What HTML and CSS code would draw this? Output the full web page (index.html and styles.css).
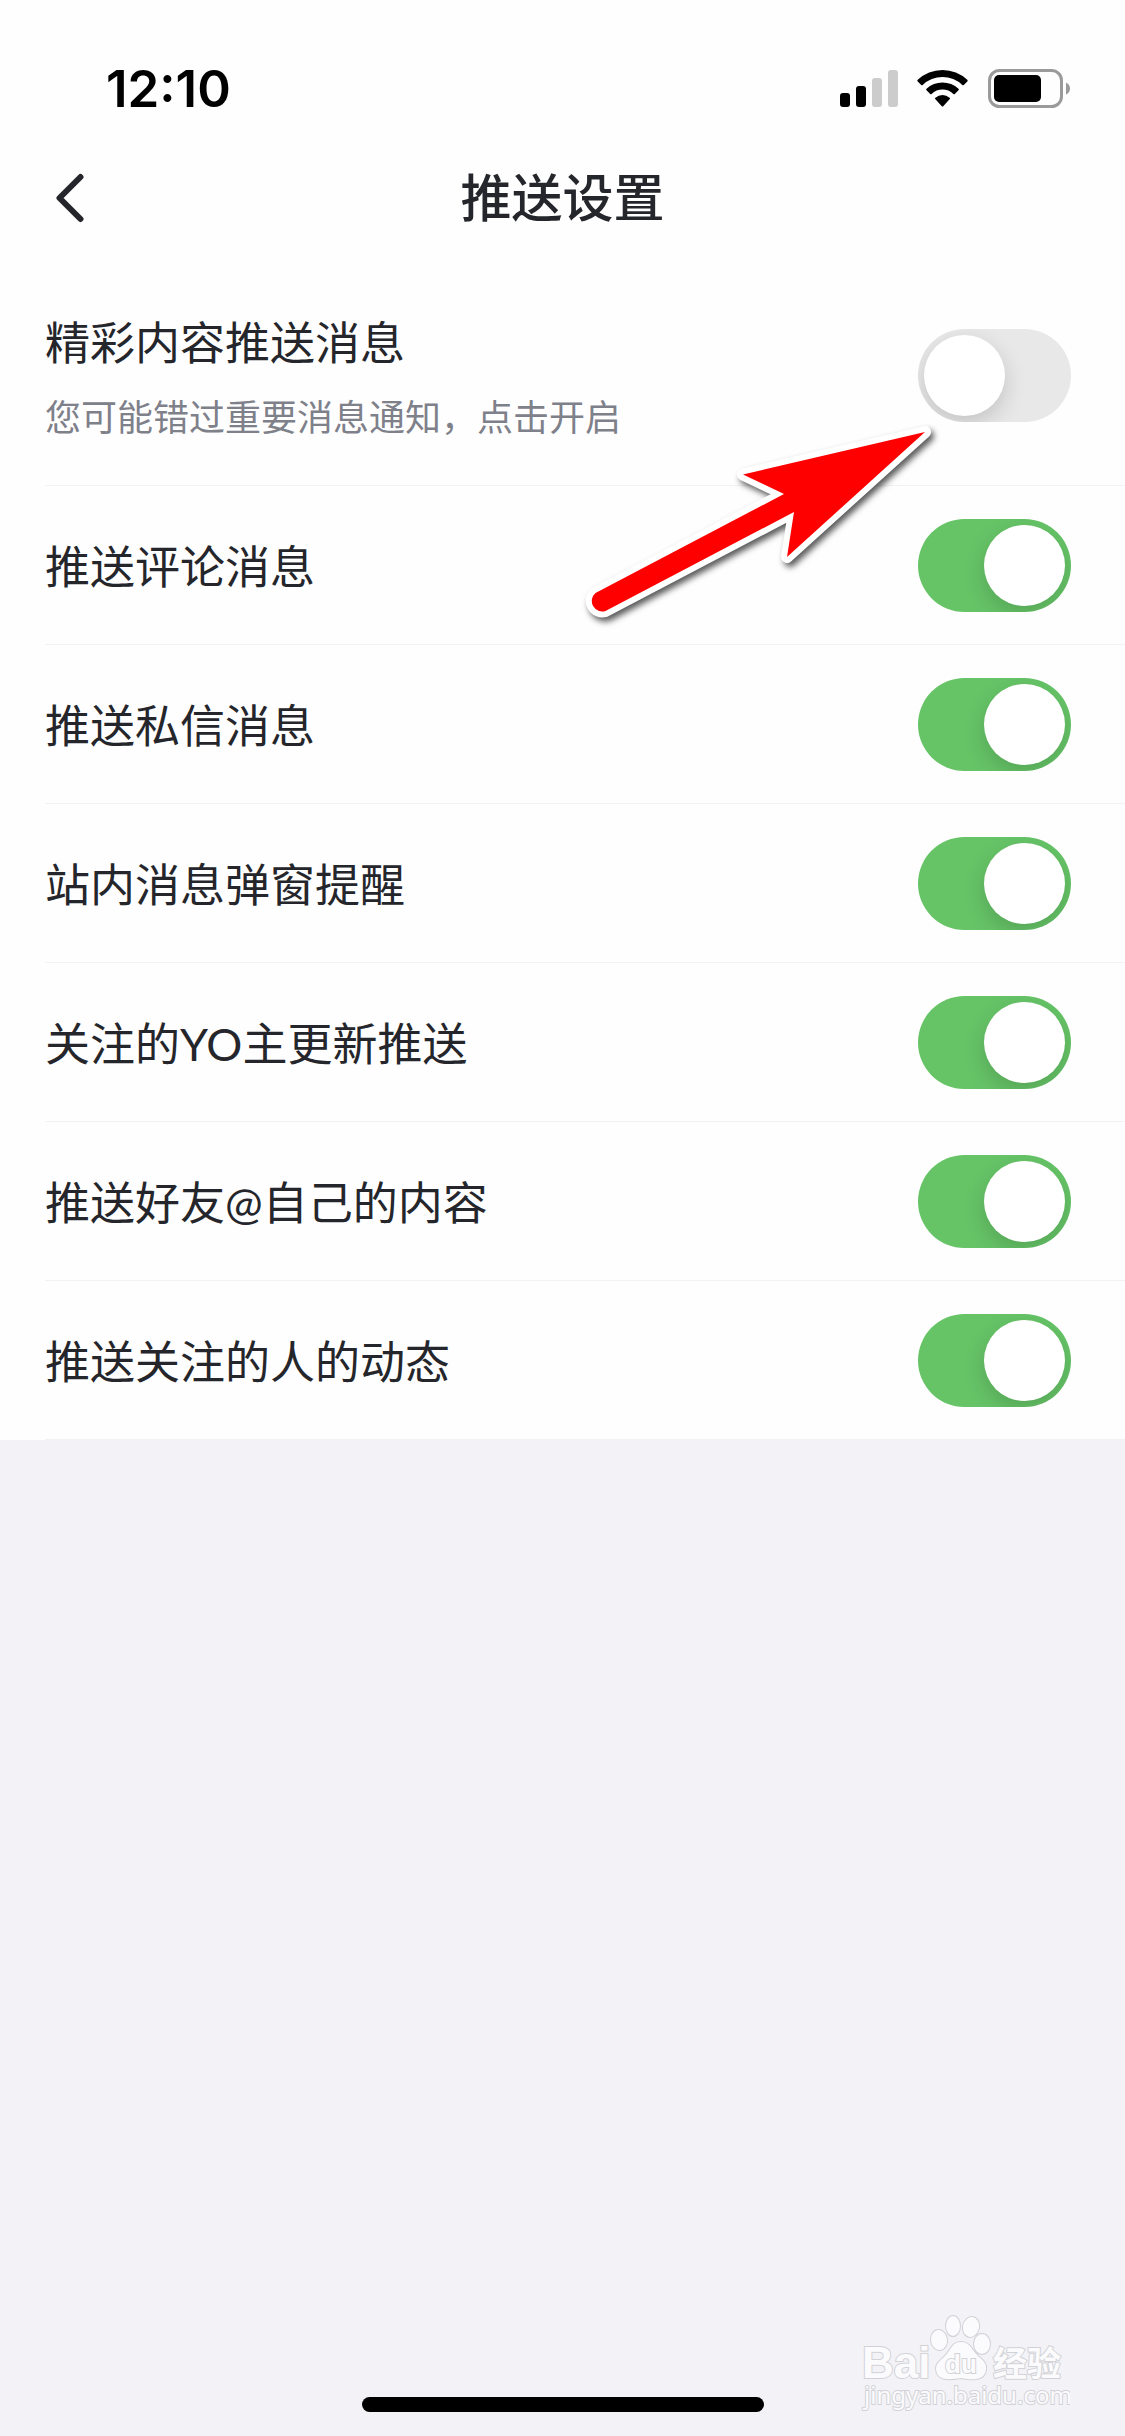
FILE: index.html
```html
<!DOCTYPE html>
<html lang="zh-CN">
<head>
<meta charset="utf-8">
<meta name="viewport" content="width=device-width">
<title>推送设置</title>
<link rel="stylesheet" href="styles.css">
</head>
<body>
<header class="top">
  <div class="status">
    <time class="clock">12:10</time>
    <div class="status-icons">
      <svg width="58" height="40" viewBox="0 0 58 40" aria-hidden="true">
        <rect x="0" y="24" width="10" height="14" rx="3"/>
        <rect x="16" y="17" width="10" height="21" rx="3"/>
        <rect x="32" y="9" width="10" height="29" rx="3" fill="#ccc"/>
        <rect x="48" y="1" width="10" height="37" rx="3" fill="#ccc"/>
      </svg>
      <svg width="52" height="40" viewBox="0 0 52 40" aria-hidden="true">
        <path d="M0.5 12.2 Q0 11.5 .7 10.8 A36 36 0 0 1 50.300 10.800 Q51 11.500 50.500 12.200 L46.800 16 Q46 16.600 45.300 16 A28.500 28.500 0 0 0 5.700 16 Q5 16.600 4.200 16 Z"/>
        <path d="M9.300 21 Q8.800 20.300 9.500 19.700 A23.500 23.500 0 0 1 41.500 19.700 Q42.200 20.300 41.700 21 L37.800 24.900 Q37.100 25.500 36.400 24.900 A16 16 0 0 0 14.600 24.900 Q13.900 25.500 13.200 24.900 Z"/>
        <path d="M18.200 30 Q17.600 29.300 18.400 28.700 A11 11 0 0 1 32.600 28.700 Q33.400 29.300 32.800 30 L26.200 37.200 Q25.500 38 24.800 37.200 Z"/>
      </svg>
      <svg width="83" height="40" viewBox="0 0 83 40" aria-hidden="true">
        <rect x="1.500" y="1.500" width="72" height="36" rx="10" fill="none" stroke="#9a9a9a" stroke-width="3"/>
        <rect x="6" y="6" width="47" height="27" rx="5"/>
        <path d="M78 13.500 Q82 15.500 82 19.500 T78 25.500 Z" fill="#9a9a9a"/>
      </svg>
    </div>
  </div>
  <nav class="nav">
    <button class="back" type="button" aria-label="返回">
      <svg width="30" height="50" viewBox="0 0 30 50" aria-hidden="true">
        <path d="M25.500 4 L4.500 25 L25.500 46" fill="none" stroke="#25262b" stroke-width="6" stroke-linecap="round" stroke-linejoin="round"/>
      </svg>
    </button>
    <h1 class="title">推送设置</h1>
  </nav>
</header>

<main class="list">
  <div class="row row-lead">
    <label class="text" for="s1"><span class="label">精彩内容推送消息</span><span class="hint">您可能错过重要消息通知，点击开启</span></label>
    <input class="switch" id="s1" type="checkbox">
    <svg class="arrow" width="360" height="210" viewBox="0 0 360 210" aria-hidden="true">
      <path d="M347 13 L165 55.500 L206 75 L17.500 174 A10.500 10.500 0 0 0 27.500 192 L216 93 L209 138 Z" fill="#f00" stroke="#fff" stroke-width="12" stroke-linejoin="round" paint-order="stroke"/>
    </svg>
  </div>
  <div class="row"><label class="label text" for="s2">推送评论消息</label><input class="switch" id="s2" type="checkbox" checked></div>
  <div class="row"><label class="label text" for="s3">推送私信消息</label><input class="switch" id="s3" type="checkbox" checked></div>
  <div class="row"><label class="label text" for="s4">站内消息弹窗提醒</label><input class="switch" id="s4" type="checkbox" checked></div>
  <div class="row"><label class="label text" for="s5">关注的YO主更新推送</label><input class="switch" id="s5" type="checkbox" checked></div>
  <div class="row"><label class="label text" for="s6">推送好友@自己的内容</label><input class="switch" id="s6" type="checkbox" checked></div>
  <div class="row"><label class="label text" for="s7">推送关注的人的动态</label><input class="switch" id="s7" type="checkbox" checked></div>
</main>

<footer class="bottom">
  <div class="home-bar"></div>
  <svg class="watermark" width="220" height="110" viewBox="0 0 220 110" role="img" aria-label="Baidu经验 jingyan.baidu.com">
    <g class="mark">
      <text class="mark-bai" x="12" y="68">Bai</text>
      <ellipse cx="89" cy="30" rx="8" ry="10" transform="rotate(-8 89 30)"/>
      <ellipse cx="103" cy="16" rx="7" ry="10"/>
      <ellipse cx="121" cy="17" rx="8" ry="10" transform="rotate(12 121 17)"/>
      <ellipse cx="132" cy="34" rx="8" ry="10"/>
      <path d="M111 32 C120 32 122 40 128 46 C134 51 137 54 136 60 C134 71 123 70 111 68 C98 70 87 71 86 59 C86 53 90 51 95 46 C101 40 102 32 111 32 Z"/>
      <text class="mark-du" x="95" y="63">du</text>
      <text class="mark-cn" x="143" y="66">经验</text>
      <text class="mark-url" x="14" y="94">jingyan.baidu.com</text>
    </g>
  </svg>
</footer>
</body>
</html>
```
FILE: styles.css
```css
* {
  box-sizing: border-box;
}

body {
  margin: 0;
  min-height: 100vh;
  display: flex;
  flex-direction: column;
  background: #f2f2f7;
  color: #25262b;
  font-family: Lato, "Noto Sans CJK SC", sans-serif;
}

.top,
.list {
  background: #fefefe;
}

.status {
  display: flex;
  justify-content: space-between;
  align-items: center;
  height: 132px;
  padding: 46px 54px 0 106px;
  color: #000;
}

.clock {
  font: 600 51px/60px Inter, sans-serif;
}

.status-icons {
  display: flex;
  gap: 19px;
}

.nav {
  display: grid;
  grid-template-columns: 1fr auto 1fr;
  align-items: center;
  height: 132px;
  padding: 0 45px;
}

.back {
  justify-self: start;
  display: flex;
  padding: 8px 10px;
  border: 0;
  background: none;
}

.title {
  margin: 0;
  padding-bottom: 6px;
  font: 500 51px/72px "Noto Sans CJK SC", sans-serif;
}

.row {
  position: relative;
  display: flex;
  align-items: center;
  min-height: 159px;
  margin-left: 45px;
  padding-right: 54px;
  border-bottom: 1px solid #f2f2f4;
}

.row-lead {
  min-height: 222px;
  padding-top: 2px;
}

.text {
  flex: 1;
  padding-top: 3px;
}

.label {
  font-size: 45px;
  line-height: 64px;
}

.hint {
  color: #7e808a;
  font-size: 36px;
  line-height: 52px;
}

.row-lead .text {
  display: flex;
  flex-direction: column;
  gap: 16px;
}

.switch {
  appearance: none;
  display: flex;
  flex: none;
  width: 153px;
  height: 93px;
  margin: 0;
  padding: 6px;
  border-radius: 47px;
  background: #e8e8e8;
  overflow: hidden;
}

.switch::before {
  content: "";
  width: 81px;
  height: 81px;
  border-radius: 50%;
  background: #fff;
  box-shadow: 0 8px 22px rgba(0, 0, 0, 0.16);
}

.switch:checked {
  justify-content: flex-end;
  background: #66c467;
}

.arrow {
  position: absolute;
  top: 155px;
  right: 187px;
  z-index: 1;
  overflow: visible;
  pointer-events: none;
  filter: drop-shadow(3px 4px 3px rgba(0, 0, 0, 0.65));
}

.bottom {
  position: relative;
  flex: 1;
  display: flex;
  justify-content: center;
  align-items: flex-end;
  padding-bottom: 24px;
}

.home-bar {
  width: 402px;
  height: 15px;
  border-radius: 8px;
  background: #000;
}

.watermark {
  position: absolute;
  right: 55px;
  bottom: 16px;
}

.mark {
  fill: #fbfbfd;
  stroke: #d2d2d6;
  stroke-width: 2px;
  paint-order: stroke;
}

.mark-bai {
  font: 700 44px "Liberation Sans", sans-serif;
}

.mark-du {
  font: 700 26px "Liberation Sans", sans-serif;
}

.mark-cn {
  font: 700 34px "Noto Sans CJK SC", sans-serif;
}

.mark-url {
  font: 400 24px "Noto Sans", sans-serif;
}
```
